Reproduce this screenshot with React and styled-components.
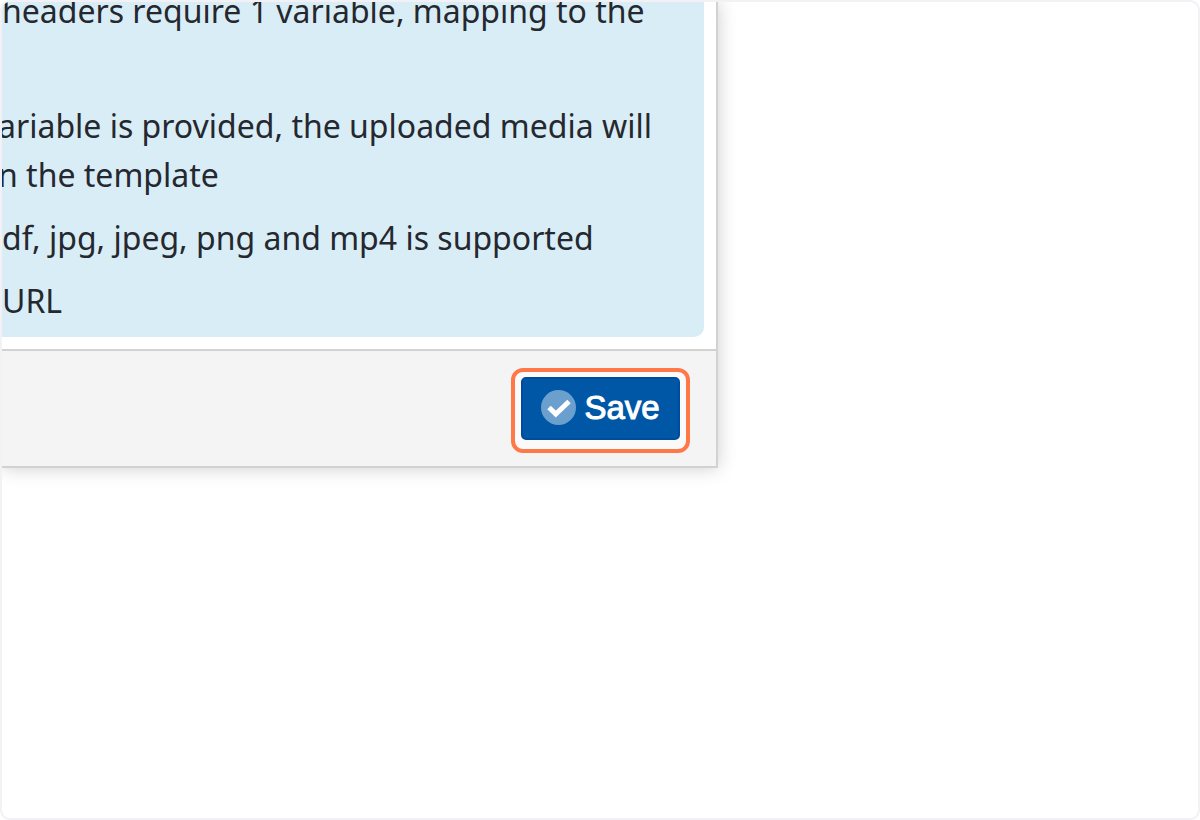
import styled, { createGlobalStyle } from "styled-components";

const GlobalStyle = createGlobalStyle`
  * {
    box-sizing: border-box;
  }

  body {
    margin: 0;
    background-color: #FFFFFF;
  }
`;

const Frame = styled.main`
  min-height: 100vh;
  border: 2px solid #F1F1F6;
  border-radius: 10px;
  background-color: #FFFFFF;
  overflow: hidden;
`;

const Dialog = styled.section`
  width: calc(60% - 2px);
  background-color: #FFFFFF;
  border-right: 2px solid #D2D2D2;
  border-bottom: 2px solid #D2D2D2;
  box-shadow: 0 0 18px rgba(0, 0, 0, 0.2);
`;

const DialogBody = styled.div`
  padding: 0 12px 12px 0;
  overflow: hidden;
`;

const InfoBox = styled.div`
  padding-bottom: 12px;
  background-color: #D9EDF7;
  border-radius: 0 0 10px 0;
`;

const NoteList = styled.ul`
  list-style: none;
  margin: -16px 0 0 0;
  padding: 0;
  display: flex;
  flex-direction: column;
  gap: 14px;
  font-family: 'Noto Sans', 'Open Sans', sans-serif;
  font-size: 32px;
  line-height: 49px;
  color: #25282E;
  white-space: nowrap;
`;

const Note = styled.li`
  margin-left: ${props => props.$cut ? '-4px' : '0'};
  padding-bottom: ${props => props.$spaced ? '52px' : '0'};
`;

const DialogFooter = styled.footer`
  display: flex;
  justify-content: flex-end;
  padding: 17px 26px 13px 26px;
  background-color: #F4F4F4;
  border-top: 2px solid #D2D2D2;
`;

const Highlight = styled.div`
  padding: 5px 6px 9px 6px;
  border: 4px solid #FF7847;
  border-radius: 12px;
  background-color: #FAFAFA;
`;

const SaveButton = styled.button`
  display: flex;
  align-items: center;
  gap: 8px;
  height: 63px;
  padding: 0 18px 2px 18px;
  border: 2px solid #004B9B;
  border-radius: 5px;
  background-color: #0057A6;
  color: #FFFFFF;
  font-family: 'Liberation Sans', Arial, sans-serif;
  font-size: 33px;
  -webkit-text-stroke: 1px #FFFFFF;
  cursor: pointer;
`;

const CheckIcon = () => (
  <svg width="35" height="35" viewBox="0 0 35 35" aria-hidden="true">
    <circle cx="17.5" cy="17.5" r="17.5" fill="#6B9FCD" />
    <path d="M8 17.5 L14.8 24 L28 11.5" fill="none" stroke="#FFFFFF" strokeWidth="5" />
  </svg>
);

const App = () => {
  return (
    <>
      <GlobalStyle />
      <Frame>
        <Dialog>
          <DialogBody>
            <InfoBox>
              <NoteList>
                <Note $spaced>headers require 1 variable, mapping to the</Note>
                <Note $cut>
                  ariable is provided, the uploaded media will
                  <br />
                  n the template
                </Note>
                <Note>df, jpg, jpeg, png and mp4 is supported</Note>
                <Note>URL</Note>
              </NoteList>
            </InfoBox>
          </DialogBody>
          <DialogFooter>
            <Highlight>
              <SaveButton type="button">
                <CheckIcon />
                Save
              </SaveButton>
            </Highlight>
          </DialogFooter>
        </Dialog>
      </Frame>
    </>
  );
};

export default App;
